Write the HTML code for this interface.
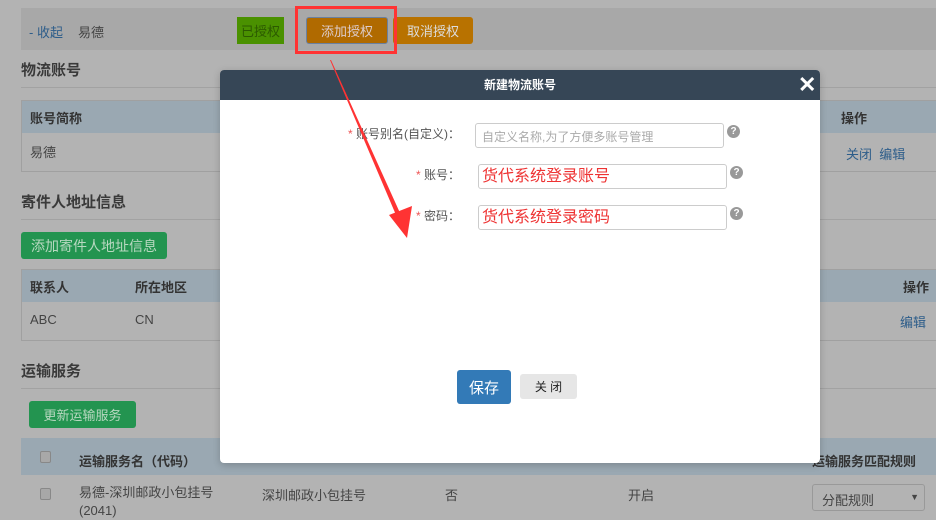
<!DOCTYPE html>
<html><head><meta charset="utf-8"><style>
*{margin:0;padding:0;box-sizing:border-box}
body{width:936px;height:520px;overflow:hidden;background:#b3b3b3;font-family:"Liberation Sans","Noto Sans CJK SC",sans-serif;font-size:13px;color:#333;position:relative}
.a{position:absolute;white-space:nowrap}
.h{font-size:15px;font-weight:bold;color:#3a3a3a}
.line{position:absolute;left:21px;right:0;height:1px;background:#a2a2a2}
.btn{position:absolute;display:flex;align-items:center;justify-content:center;border-radius:3px}
.th{position:absolute;left:21px;right:0;background:#9aa8b2}
.cb{position:absolute;width:11px;height:12px;border:1px solid #888;border-radius:2px;background:#a8a8a8}
.lbl{position:absolute;font-size:12px;color:#555;text-align:right}
.lbl b{color:#e55;font-weight:normal}
.inp{position:absolute;height:25px;border:1px solid #ccc;border-radius:3px;background:#fff}
.q{position:absolute;width:13px;height:13px;border-radius:50%;background:#999;color:#fff;font-size:10px;font-weight:bold;text-align:center;line-height:13px}
</style></head><body>
<div class="a" style="left:21px;top:8px;width:915px;height:42px;background:#a8a8a8"></div>
<div class="a" style="left:29px;top:22px;color:#2d5d8a">- 收起</div>
<div class="a" style="left:78px;top:22px;color:#444">易德</div>
<div class="btn" style="left:237px;top:17px;width:47px;height:27px;background:#4a9100;color:#2c5a00;border-radius:0">已授权</div>
<div class="btn" style="left:306px;top:17px;width:82px;height:27px;background:#b06a00;color:#dcc;border:1px solid #6a80a0">添加授权</div>
<div class="btn" style="left:393px;top:17px;width:80px;height:27px;background:#b87200;color:#ddd">取消授权</div>
<div class="a" style="left:295px;top:6px;width:102px;height:48px;border:3px solid #f33"></div>

<div class="a h" style="left:21px;top:59px">物流账号</div>
<div class="line" style="top:87px"></div>
<div class="th" style="top:100px;height:33px"></div>
<div class="a" style="left:21px;top:100px;width:915px;height:72px;border:1px solid #a0a0a0;border-right:none"></div>
<div class="a" style="left:30px;top:108px;font-weight:bold;color:#333">账号简称</div>
<div class="a" style="left:30px;top:142px;color:#444">易德</div>
<div class="a" style="left:841px;top:108px;font-weight:bold;color:#333">操作</div>
<div class="a" style="left:846px;top:144px;color:#2d5d8a">关闭 &nbsp;编辑</div>

<div class="a h" style="left:21px;top:191px">寄件人地址信息</div>
<div class="line" style="top:219px"></div>
<div class="btn" style="left:21px;top:232px;width:146px;height:27px;background:#239450;color:#b8d8c0;font-size:14px">添加寄件人地址信息</div>
<div class="th" style="top:269px;height:33px"></div>
<div class="a" style="left:21px;top:269px;width:915px;height:72px;border:1px solid #a0a0a0;border-right:none"></div>
<div class="a" style="left:30px;top:277px;font-weight:bold">联系人</div>
<div class="a" style="left:135px;top:277px;font-weight:bold">所在地区</div>
<div class="a" style="left:903px;top:277px;font-weight:bold">操作</div>
<div class="a" style="left:30px;top:312px;color:#444">ABC</div>
<div class="a" style="left:135px;top:312px;color:#444">CN</div>
<div class="a" style="left:900px;top:312px;color:#2d5d8a">编辑</div>

<div class="a h" style="left:21px;top:360px">运输服务</div>
<div class="line" style="top:388px"></div>
<div class="btn" style="left:29px;top:401px;width:107px;height:27px;background:#239450;color:#b8d8c0">更新运输服务</div>
<div class="th" style="top:438px;height:37px"></div>
<div class="cb" style="left:40px;top:451px"></div>
<div class="a" style="left:79px;top:451px;font-weight:bold">运输服务名（代码）</div>
<div class="a" style="left:812px;top:451px;font-weight:bold">运输服务匹配规则</div>
<div class="cb" style="left:40px;top:488px"></div>
<div class="a" style="left:79px;top:484px;color:#444;line-height:18px">易德-深圳邮政小包挂号<br>(2041)</div>
<div class="a" style="left:262px;top:485px;color:#444">深圳邮政小包挂号</div>
<div class="a" style="left:445px;top:485px;color:#444">否</div>
<div class="a" style="left:628px;top:485px;color:#444">开启</div>
<div class="a" style="left:812px;top:484px;width:113px;height:27px;border:1px solid #999;border-radius:3px;padding:5px 9px;color:#444">分配规则<span style="position:absolute;right:5px;top:7px;font-size:9px">▼</span></div>

<div class="a" style="left:220px;top:70px;width:600px;height:393px;background:#fff;border-radius:4px;box-shadow:0 2px 8px rgba(0,0,0,.2);overflow:hidden">
<div style="height:30px;background:#364656;color:#fff;font-size:12px;font-weight:bold;text-align:center;line-height:30px">新建物流账号</div>
<div class="a" style="left:578px;top:2px;color:#fff;font-size:22px;font-weight:bold">✕</div>
</div>
<div class="lbl" style="left:300px;width:160px;top:125px"><b>*</b> 账号别名(自定义)：</div>
<div class="inp" style="left:475px;top:123px;width:249px;font-size:12px;color:#aaa;padding:4px 6px">自定义名称,为了方便多账号管理</div>
<div class="q" style="left:727px;top:125px">?</div>
<div class="lbl" style="left:380px;width:80px;top:166px"><b>*</b> 账号：</div>
<div class="inp" style="left:478px;top:164px;width:249px;font-size:16px;line-height:23px;color:#e33;padding:0 3px">货代系统登录账号</div>
<div class="q" style="left:730px;top:166px">?</div>
<div class="lbl" style="left:380px;width:80px;top:207px"><b>*</b> 密码：</div>
<div class="inp" style="left:478px;top:205px;width:249px;font-size:16px;line-height:23px;color:#e33;padding:0 3px">货代系统登录密码</div>
<div class="q" style="left:730px;top:207px">?</div>
<div class="btn" style="left:457px;top:370px;width:54px;height:34px;background:#337ab7;color:#fff;font-size:15px">保存</div>
<div class="btn" style="left:520px;top:374px;width:57px;height:25px;background:#e6e6e6;color:#222;font-size:12px">关 闭</div>

<svg class="a" style="left:0;top:0" width="936" height="520">
<polygon points="330,60 331,60 400,213 396,215" fill="#f33"/>
<polygon points="389,215 412,206 407,238" fill="#f33"/>
</svg>
</body></html>
